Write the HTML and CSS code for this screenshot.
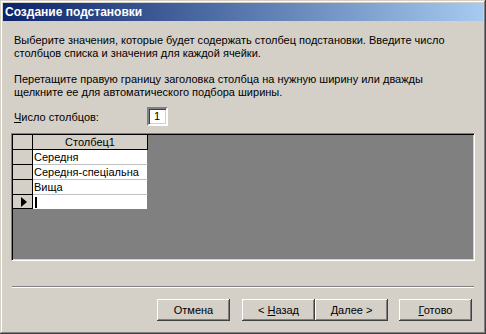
FILE: index.html
```html
<!DOCTYPE html>
<html lang="ru">
<head>
    <meta charset="UTF-8" />
    <title>Создание подстановки</title>
    <link rel="stylesheet" href="styles.css">
</head>
<body>
    <div class="window">
        <div class="titlebar">Создание подстановки</div>

        <div class="content">
            <p class="text">Выберите значения, которые будет содержать столбец подстановки. Введите число столбцов списка и значения для каждой ячейки.</p>
            <p class="text">Перетащите правую границу заголовка столбца на нужную ширину или дважды щелкните ее для автоматического подбора ширины.</p>

            <div class="count-row">
                <label class="count-label"><u>Ч</u>исло столбцов:</label>
                <div class="count-input">1</div>
            </div>

            <div class="grid">
                <div class="sheet">
                    <div class="sel head"></div>
                    <div class="col-head">Столбец1</div>

                    <div class="sel"></div>
                    <div class="cell">Середня</div>

                    <div class="sel"></div>
                    <div class="cell">Середня-спеціальна</div>

                    <div class="sel"></div>
                    <div class="cell">Вища</div>

                    <div class="sel current"><span class="arrow"></span></div>
                    <div class="cell last"><span class="caret"></span></div>
                </div>
            </div>

            <div class="separator"></div>

            <div class="buttons">
                <button class="btn cancel">Отмена</button>
                <button class="btn back">&lt; <u>Н</u>азад</button>
                <button class="btn"><u>Д</u>алее &gt;</button>
                <button class="btn finish"><u>Г</u>отово</button>
            </div>
        </div>
    </div>
</body>
</html>
```

FILE: styles.css
```css
* {
    margin: 0;
    padding: 0;
    box-sizing: border-box;
}

body {
    width: 486px;
    height: 334px;
    overflow: hidden;
    font-family: 'Liberation Sans', Arial, sans-serif;
    font-size: 11px;
    color: #000;
}

.window {
    width: 486px;
    height: 334px;
    padding: 3px;
    background: #d4d0c8;
    box-shadow:
        inset -1px -1px #404040,
        inset 1px 1px #d4d0c8,
        inset -2px -2px #808080,
        inset 2px 2px #ffffff;
    display: flex;
    flex-direction: column;
}

/* Title bar */
.titlebar {
    height: 18px;
    padding-left: 2px;
    line-height: 18px;
    font-size: 12px;
    font-weight: bold;
    color: #fff;
    background: linear-gradient(to right, #0a246a, #a6caf0);
}

.content {
    padding: 13px 8px 0 8px;
    display: flex;
    flex-direction: column;
}

.text {
    padding-left: 3px;
    line-height: 13px;
}

.text + .text {
    margin-top: 13px;
}

/* Column count */
.count-row {
    margin-top: 8px;
    display: flex;
    align-items: center;
}

.count-label {
    width: 136px;
    padding-left: 3px;
}

.count-input {
    width: 21px;
    height: 19px;
    padding-left: 5px;
    line-height: 15px;
    background: #fff;
    border: 2px solid;
    border-color: #808080 #fff #fff #808080;
    box-shadow: inset 1px 1px #404040, inset -1px -1px #d4d0c8;
}

/* Datasheet */
.grid {
    margin-top: 7px;
    width: 464px;
    height: 128px;
    background: #808080;
    border: 1px solid;
    border-color: #808080 #fff #fff #808080;
    box-shadow: inset 1px 1px #000, inset -1px -1px #d4d0c8;
    padding: 1px;
}

.sheet {
    display: grid;
    grid-template-columns: 20px 115px;
    grid-template-rows: 15px 15px 15px 15px 14px;
}

.sel {
    background: #d4d0c8;
    border-right: 1px solid #000;
    border-bottom: 1px solid #000;
    display: flex;
    align-items: center;
    justify-content: center;
}

.col-head {
    background: #d4d0c8;
    border-right: 1px solid #000;
    border-bottom: 1px solid #000;
    text-align: center;
    line-height: 14px;
}

.cell {
    background: #fff;
    border-right: 1px solid #808080;
    border-bottom: 1px solid #c0c0c0;
    padding-left: 1px;
    line-height: 14px;
    white-space: nowrap;
}

.cell.last {
    border-bottom: none;
    display: flex;
    align-items: center;
    padding-left: 2px;
}

.arrow {
    width: 0;
    height: 0;
    border-top: 5px solid transparent;
    border-bottom: 5px solid transparent;
    border-left: 6px solid #000;
    margin-left: 2px;
}

.caret {
    width: 2px;
    height: 11px;
    background: #000;
}

/* Separator and buttons */
.separator {
    margin-top: 25px;
    margin-left: 1px;
    width: 462px;
    height: 2px;
    border-top: 1px solid #808080;
    border-bottom: 1px solid #fff;
}

.buttons {
    margin-top: 11px;
    display: flex;
    padding-left: 146px;
}

.btn {
    width: 73px;
    height: 22px;
    font-family: inherit;
    font-size: 11px;
    color: #000;
    background: #d4d0c8;
    border: none;
    box-shadow:
        inset -1px -1px #404040,
        inset 1px 1px #fff,
        inset -2px -2px #808080,
        inset 2px 2px #d4d0c8;
}

.btn.back {
    margin-left: 12px;
}

.btn.finish {
    margin-left: 11px;
}
```
